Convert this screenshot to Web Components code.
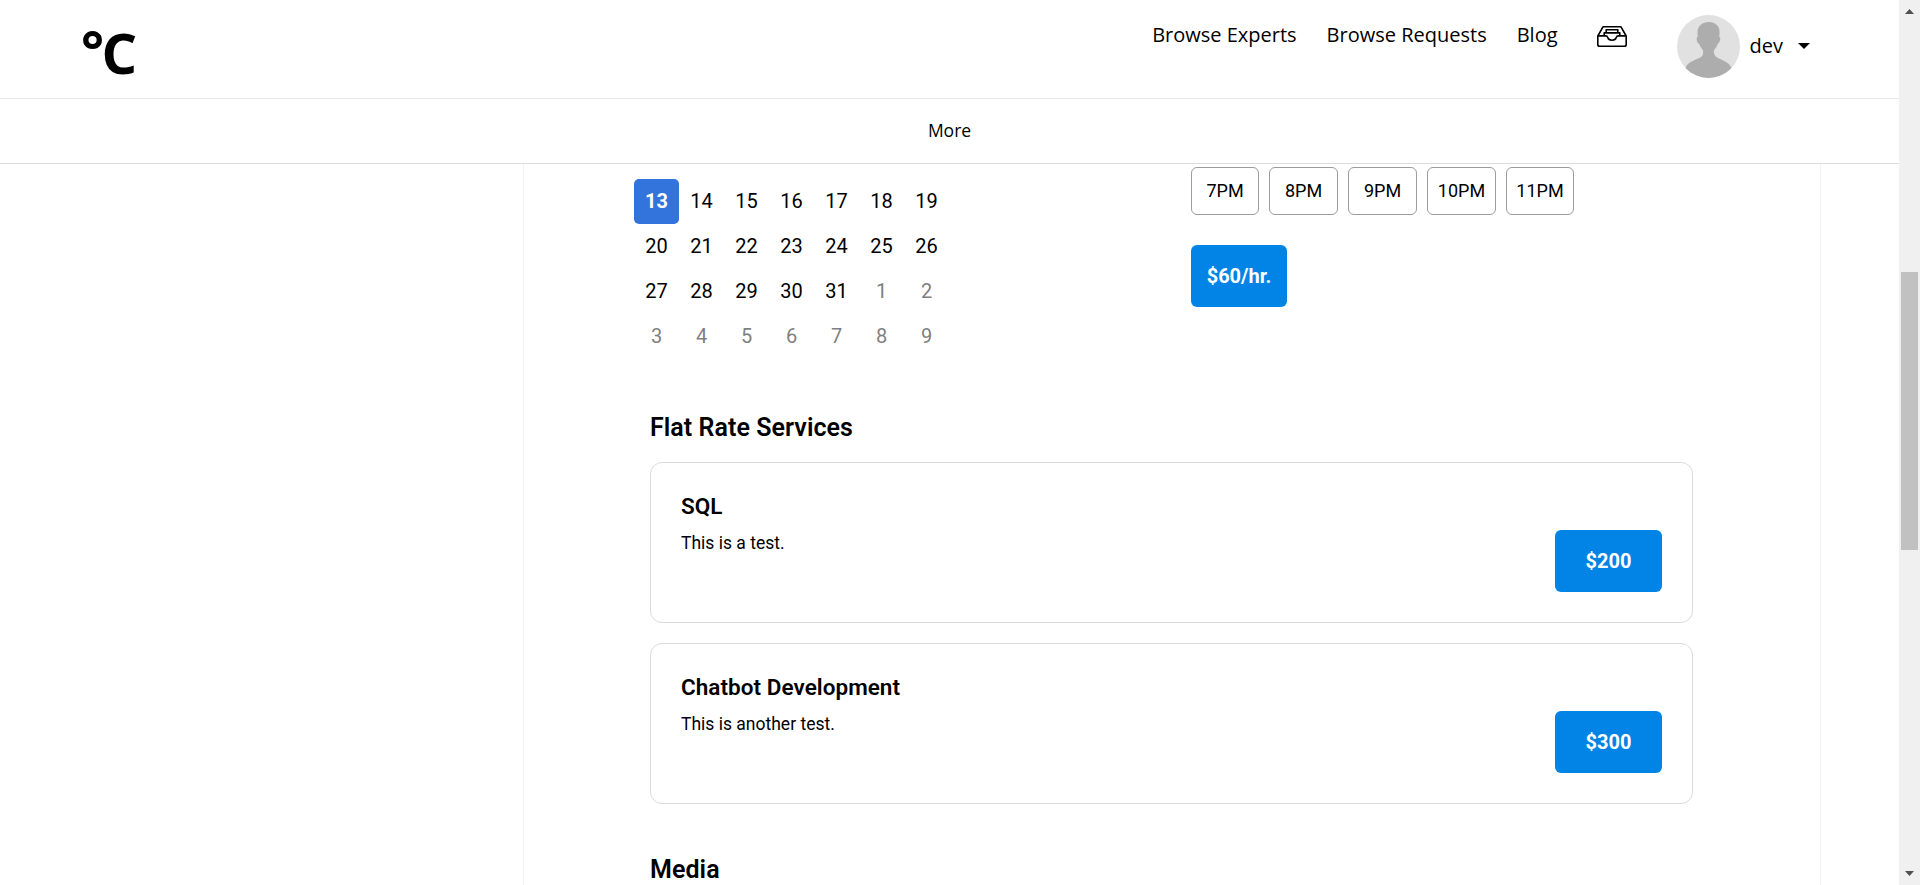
<!DOCTYPE html>
<html lang="en">
<head>
<meta charset="utf-8">
<title>Expert profile</title>
<style>
html,body{margin:0;height:100%;overflow:hidden;background:#fff;color:#000}
</style>
</head>
<body>
<app-page></app-page>
<script>
function define(name, html, after) {
  const t = document.createElement('template');
  t.innerHTML = html;
  customElements.define(name, class extends HTMLElement {
    connectedCallback() {
      if (this.shadowRoot) return;
      this.attachShadow({ mode: 'open' }).append(t.content.cloneNode(true));
      if (after) after(this, this.shadowRoot);
    }
  });
}

define('brand-logo', `<style>
:host{display:flex;font:700 57px/56px "Open Sans",sans-serif;white-space:nowrap;height:56px}
.deg{font-size:54px;width:20.500px;margin-top:-1px}
.c{font-size:56px;margin-top:1.500px}
</style><span class="deg">°</span><span class="c">C</span>`);

define('inbox-icon', `<style>:host{display:block;width:30px;height:21px}svg{display:block}</style>
<svg width="30" height="21" viewBox="0 0 30 21" fill="none" stroke="#000" stroke-width="1.6" stroke-linejoin="round">
<path d="M.8 10 6 .8H24L29.2 10V18.400Q29.200 20.200 27.400 20.200H2.600Q.8 20.200 .8 18.400ZM.8 9.900H8.800Q10.200 9.900 10.700 11.500Q11.500 14.200 15 14.200Q18.500 14.200 19.300 11.500Q19.800 9.900 21.200 9.900H29.200M7.200 9.500V6.900H22.800V9.500M9.200 6.600V3.700H20.800V6.600"/></svg>`);

define('user-avatar', `<style>:host{display:block;width:63px;height:63px}svg{display:block}</style>
<svg width="63" height="63" viewBox="0 0 63 63"><circle cx="31.5" cy="31.5" r="31.5" fill="#e1e1e1"/>
<path fill="#adadad" d="M31.8 7C38 7 42.8 11 42.6 17.2L42.2 22Q43.6 21.800 43.200 24.500Q42.600 28.200 40.900 28.700Q39.800 32 37 35.200Q36.300 39 38.500 41.200C42 44.500 51.500 45.800 54.500 52.900A31.500 31.500 0 0 1 8.500 52.900C11 45.800 21 44.500 25 41.200Q26.800 39 25.900 35.200Q23.300 32 22 28.700Q20.200 28.200 19.700 24.500Q19.500 21.800 20.700 22L20.500 17.200C20.600 11 25.500 7 31.800 7Z"/></svg>`);

define('site-header', `<style>
:host{display:flex;box-sizing:border-box;height:99px;border-bottom:1px solid #e9e9e9;background:#fff;font:20px/28px "Open Sans",sans-serif;align-items:flex-start;padding:0 89px 0 81px}
brand-logo{margin-top:22px}
nav{display:flex;gap:30px;margin:21px 0 0 auto}
inbox-icon{margin:26px 0 0 39px}
user-avatar{margin:15px 10px 0 50px}
.name{margin-top:32px}
.caret{margin:43px 0 0 15px;border:6px solid transparent;border-top-color:#000;border-bottom:0}
</style><brand-logo></brand-logo>
<nav><span>Browse Experts</span><span>Browse Requests</span><span>Blog</span></nav>
<inbox-icon></inbox-icon><user-avatar></user-avatar><span class="name">dev</span><i class="caret"></i>`);

define('sub-nav', `<style>
:host{display:flex;box-sizing:border-box;height:65px;border-bottom:1px solid #dcdcdc;background:#fff;justify-content:center;align-items:flex-start;padding-top:19px;font:17.500px/24px "Open Sans",sans-serif}
</style><span>More</span>`);

define('month-grid', `<style>
:host{display:grid;grid-template-columns:repeat(7,45px);grid-auto-rows:45px;font-size:20px;line-height:45px;text-align:center}
.out{color:#7f7f7f}
.on{background:#3273dc;color:#fff;font-weight:700;border-radius:5px}
</style>`, (el, root) => {
  for (let i = 13; i < 41; i++) {
    const s = document.createElement('span');
    s.textContent = i > 31 ? i - 31 : i;
    if (i > 31) s.className = 'out';
    if (i === 13) s.className = 'on';
    root.append(s);
  }
});

define('time-slot', `<style>
:host{display:block;box-sizing:border-box;height:48px;border:1px solid #9b9ba0;border-radius:6px;font-size:18px;line-height:46px;text-align:center}
</style><slot></slot>`);

define('price-button', `<style>
:host{display:flex;box-sizing:border-box;height:62px;background:#0284e6;color:#fff;border-radius:6px;font-size:20px;font-weight:700;align-items:center;justify-content:center}
</style><slot></slot>`);

define('section-title', `<style>:host{display:block;font-weight:600;font-size:25px;line-height:30px;letter-spacing:.06px}</style><slot></slot>`);

define('service-card', `<style>
:host{display:flex;box-sizing:border-box;width:1043px;height:161px;border:1px solid #dbdbdb;border-radius:12px;padding:30px;justify-content:space-between;align-items:flex-end}
.text{align-self:flex-start}
.title{font-weight:600;font-size:22.500px;line-height:27px;letter-spacing:.04px}
.desc{font-size:17.500px;line-height:26px;margin-top:10px}
price-button{width:107px}
</style><div class="text"><div class="title"><slot name="title"></slot></div><div class="desc"><slot></slot></div></div>
<price-button><slot name="price"></slot></price-button>`);

define('scroll-bar', `<style>
:host{display:flex;flex-direction:column;box-sizing:border-box;width:21px;height:885px;background:#f0f0f0;align-items:center}
svg{display:block;flex:none}
.thumb{width:17px;height:278px;margin:251px 0 auto;background:#c1c1c1}
</style><svg width="21" height="21"><path d="M6 14 10.500 9 15 14Z" fill="#505050"/></svg><div class="thumb"></div>
<svg width="21" height="21"><path d="M6 7 10.500 12 15 7Z" fill="#505050"/></svg>`);

define('app-page', `<style>
:host{display:flex;width:1920px;height:885px;overflow:hidden;font-family:Roboto,sans-serif}
.view{width:1899px;height:885px;overflow:hidden}
main{box-sizing:border-box;width:1298px;height:721px;margin-left:523px;border:solid #f3f3f3;border-width:0 1px;overflow:hidden}
.booking{display:flex;padding-left:110px;height:242px}
month-grid{margin-top:15px;width:315px}
.times{margin:3px 0 0 242px}
.slots{display:grid;grid-template-columns:68px 69px 69px 69px 68px;gap:10px}
.times price-button{width:96px;margin-top:30px}
.services{padding:7px 0 0 126px}
service-card{margin-top:20px}
.services service-card:first-of-type{margin-top:19px}
.services section-title:last-child{margin-top:51px}
</style>
<div class="view"><site-header></site-header><sub-nav></sub-nav>
<main><div class="booking"><month-grid></month-grid><div class="times"><div class="slots">
<time-slot>7PM</time-slot><time-slot>8PM</time-slot><time-slot>9PM</time-slot><time-slot>10PM</time-slot><time-slot>11PM</time-slot></div>
<price-button>$60/hr.</price-button></div></div>
<div class="services"><section-title>Flat Rate Services</section-title>
<service-card><span slot="title">SQL</span>This is a test.<span slot="price">$200</span></service-card>
<service-card><span slot="title">Chatbot Development</span>This is another test.<span slot="price">$300</span></service-card>
<section-title>Media</section-title></div></main></div>
<scroll-bar></scroll-bar>`);
</script>
</body>
</html>
